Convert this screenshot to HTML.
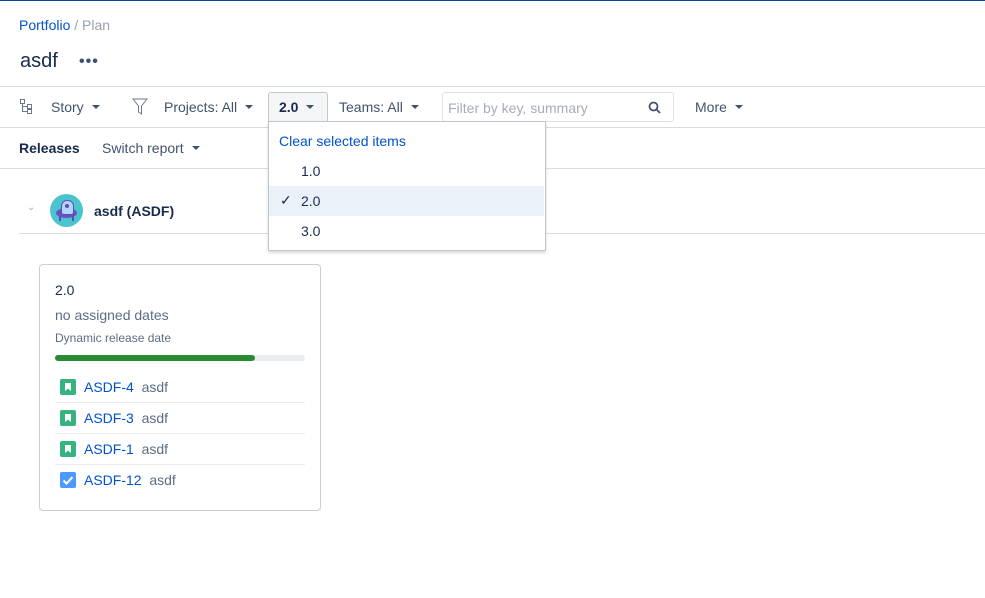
<!DOCTYPE html><html><head><style>
body{margin:0;width:985px;height:598px;position:relative;font-family:"Liberation Sans",Arial,sans-serif;background:#fff;overflow:hidden;color:#172b4d}
.a{position:absolute;white-space:nowrap}
.hr{position:absolute;height:1px;background:#dcdcdc}
.car{display:inline-block;width:0;height:0;border-left:4px solid transparent;border-right:4px solid transparent;border-top:4px solid #42526e;vertical-align:middle;margin-left:8px;margin-top:-2px}
.t{font-size:14px;color:#42526e}
.link{color:#0052cc}
.ic{position:absolute;width:16px;height:16px;border-radius:2px;background:#36b37e}
.ic:after{content:"";position:absolute;left:5px;top:4px;width:6px;height:8px;background:#fff;clip-path:polygon(0 0,100% 0,100% 100%,50% 70%,0 100%)}
</style></head><body>
<div class="a" style="left:0;top:0;width:985px;height:1px;background:#0747a6"></div>
<div class="a" style="left:19px;top:17px;font-size:14px"><span class="link">Portfolio</span> <span style="color:#97a0af">/ Plan</span></div>
<div class="a" style="left:20px;top:50px;font-size:20px;color:#172b4d">asdf</div>
<div class="a" style="left:79px;top:53px;font-size:16px;font-weight:bold;color:#42526e;letter-spacing:1px">•••</div>
<div class="hr" style="left:0;top:86px;width:985px"></div>
<svg class="a" style="left:20px;top:99px" width="13" height="15" viewBox="0 0 13 15" fill="none" stroke="#6b778c"><rect x="0.5" y="0.5" width="4" height="4"/><rect x="7.5" y="5.5" width="4" height="4"/><rect x="7.5" y="10.5" width="4" height="4"/><path d="M2.5 4.5v8h5M2.5 7.5h5"/></svg>
<div class="a t" style="left:51px;top:99px">Story<span class="car"></span></div>
<svg class="a" style="left:132px;top:98px" width="16" height="17" viewBox="0 0 16 17" fill="none" stroke="#6b778c"><path d="M1 1h14l-5.5 7v8l-3-2v-6z"/></svg>
<div class="a t" style="left:164px;top:99px">Projects: All<span class="car"></span></div>
<div class="a" style="left:268px;top:92px;width:58px;height:28px;background:#f4f5f7;border:1px solid #c1c7d0;border-bottom:none;border-radius:3px 3px 0 0"></div>
<div class="a" style="left:279px;top:99px;font-size:14px;font-weight:bold;color:#172b4d">2.0<span class="car"></span></div>
<div class="a t" style="left:339px;top:99px">Teams: All<span class="car"></span></div>
<div class="a" style="left:442px;top:92px;width:230px;height:28px;border:1px solid #dfe1e6;border-radius:3px"></div>
<div class="a" style="left:448px;top:100px;font-size:14px;color:#a5adba">Filter by key, summary</div>
<svg class="a" style="left:648px;top:101px" width="13" height="13" viewBox="0 0 13 13" fill="none" stroke="#42526e" stroke-width="1.8"><circle cx="5.5" cy="5.5" r="4"/><path d="M8.5 8.5l3.5 3.5"/></svg>
<div class="a t" style="left:695px;top:99px">More<span class="car"></span></div>
<div class="hr" style="left:0;top:127px;width:985px"></div>
<div class="a" style="left:19px;top:140px;font-size:14px;font-weight:bold;color:#172b4d">Releases</div>
<div class="a t" style="left:102px;top:140px">Switch report<span class="car"></span></div>
<div class="hr" style="left:0;top:168px;width:985px"></div>
<div class="a" style="left:27px;top:202px;font-size:10px;color:#a5adba">&#8964;</div>
<div class="a" style="left:50px;top:194px;width:33px;height:33px;border-radius:50%;background:#4bc4d0;overflow:hidden">
<div class="a" style="left:6px;top:14px;width:21px;height:10px;border-radius:50%;background:#6554c0"></div>
<div class="a" style="left:11px;top:6px;width:11px;height:13px;border-radius:6px 6px 3px 3px;background:#b3d4ff;border:1px solid #5e4db2"></div>
<div class="a" style="left:15px;top:10px;width:4px;height:4px;border-radius:50%;background:#5e4db2"></div>
<div class="a" style="left:9px;top:22px;width:2px;height:5px;background:#5e4db2"></div><div class="a" style="left:22px;top:22px;width:2px;height:5px;background:#5e4db2"></div>
</div>
<div class="a" style="left:94px;top:203px;font-size:14px;font-weight:bold;color:#172b4d">asdf (ASDF)</div>
<div class="hr" style="left:19px;top:233px;width:966px"></div>
<div class="a" style="left:39px;top:264px;width:280px;height:245px;border:1px solid #ccc;border-radius:4px"></div>
<div class="a" style="left:55px;top:282px;font-size:14px;color:#172b4d">2.0</div>
<div class="a" style="left:55px;top:307px;font-size:14px;color:#5e6c84">no assigned dates</div>
<div class="a" style="left:55px;top:331px;font-size:12px;color:#5e6c84">Dynamic release date</div>
<div class="a" style="left:55px;top:355px;width:250px;height:6px;border-radius:3px;background:#ebecf0"></div>
<div class="a" style="left:55px;top:355px;width:200px;height:6px;border-radius:3px;background:#2a8a33"></div>
<div class="ic" style="left:60px;top:379px"></div>
<div class="a" style="left:84px;top:379px;font-size:14px"><span class="link">ASDF-4</span>&nbsp; <span style="color:#5e6c84">asdf</span></div>
<div class="hr" style="left:55px;top:402px;width:250px;background:#ebecf0"></div>
<div class="ic" style="left:60px;top:410px"></div>
<div class="a" style="left:84px;top:410px;font-size:14px"><span class="link">ASDF-3</span>&nbsp; <span style="color:#5e6c84">asdf</span></div>
<div class="hr" style="left:55px;top:433px;width:250px;background:#ebecf0"></div>
<div class="ic" style="left:60px;top:441px"></div>
<div class="a" style="left:84px;top:441px;font-size:14px"><span class="link">ASDF-1</span>&nbsp; <span style="color:#5e6c84">asdf</span></div>
<div class="hr" style="left:55px;top:464px;width:250px;background:#ebecf0"></div>
<div class="a" style="left:60px;top:472px;width:16px;height:16px;border-radius:2px;background:#4c9aff"></div>
<svg class="a" style="left:60px;top:472px" width="16" height="16" viewBox="0 0 16 16" fill="none" stroke="#fff" stroke-width="2"><path d="M3.5 8.5l3 3 6-6.5"/></svg>
<div class="a" style="left:84px;top:472px;font-size:14px"><span class="link">ASDF-12</span>&nbsp; <span style="color:#5e6c84">asdf</span></div>
<div class="a" style="left:268px;top:121px;width:276px;height:128px;background:#fff;border:1px solid #c1c7d0;box-shadow:0 2px 3px rgba(0,0,0,.15)"></div>
<div class="a link" style="left:279px;top:133px;font-size:14px">Clear selected items</div>
<div class="a" style="left:301px;top:163px;font-size:14px;color:#172b4d">1.0</div>
<div class="a" style="left:269px;top:186px;width:275px;height:30px;background:#ebf1f9"></div>
<div class="a" style="left:280px;top:192px;font-size:14px;color:#172b4d">&#10003;</div>
<div class="a" style="left:301px;top:193px;font-size:14px;color:#172b4d">2.0</div>
<div class="a" style="left:301px;top:223px;font-size:14px;color:#172b4d">3.0</div>
</body></html>
